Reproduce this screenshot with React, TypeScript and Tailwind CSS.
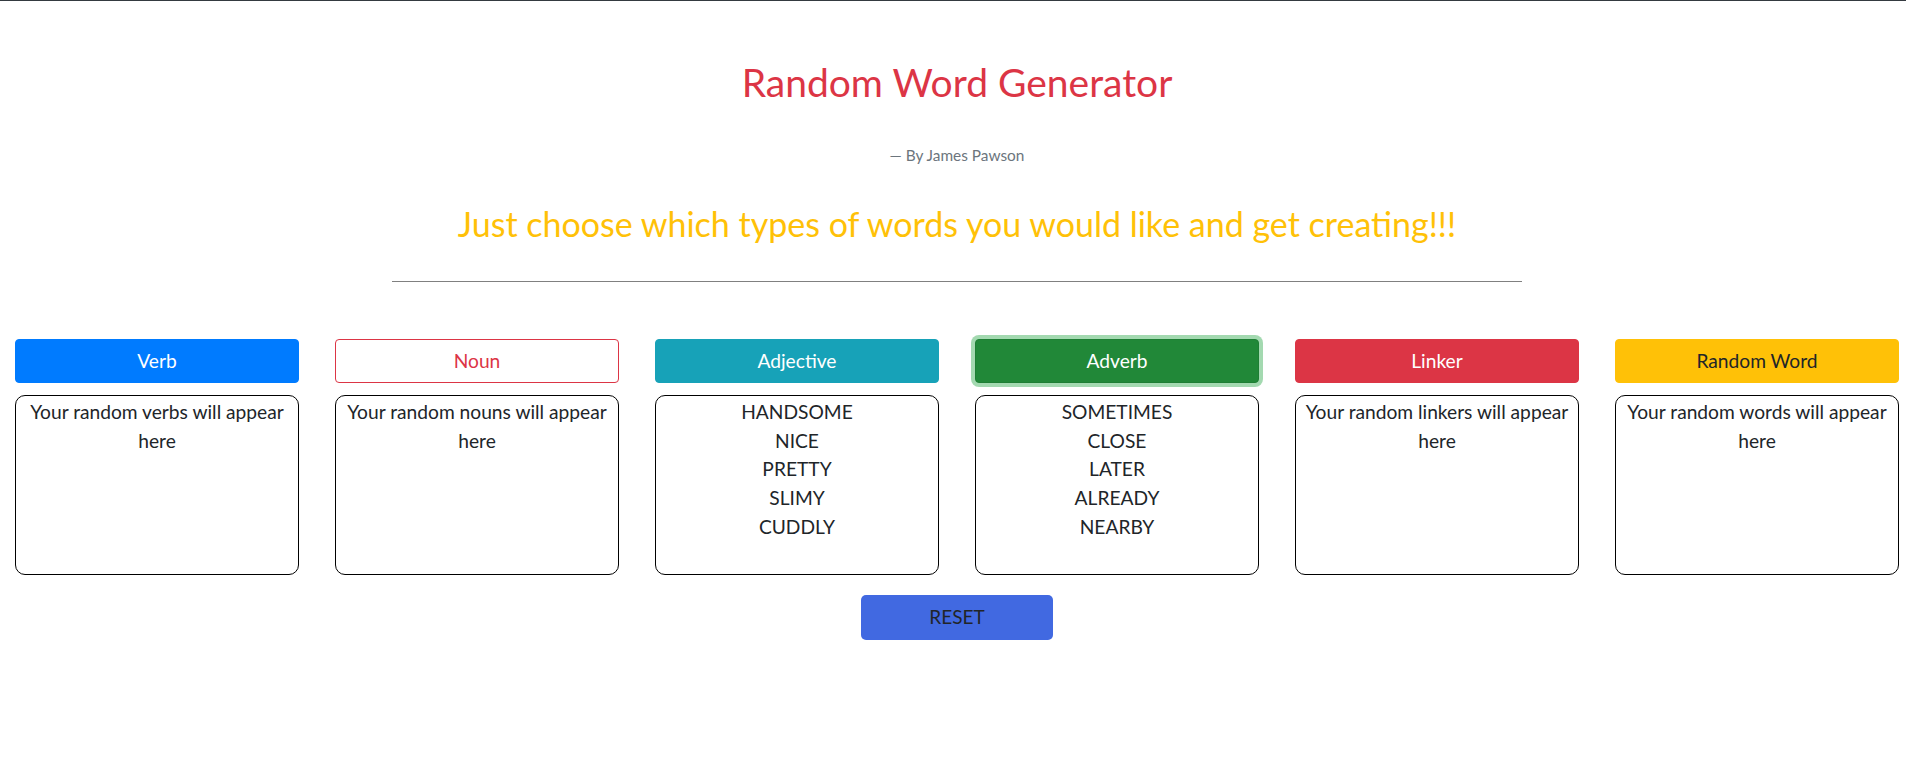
import React from "react";

const font = { fontFamily: "Lato, 'Noto Sans', sans-serif" };

type Col = {
  label: string;
  btn: string;
  items?: string[];
  placeholder?: string;
};

const cols: Col[] = [
  {
    label: "Verb",
    btn: "bg-[#007bff] text-white border-[#007bff]",
    placeholder: "Your random verbs will appear here",
  },
  {
    label: "Noun",
    btn: "bg-white text-[#dc3545] border-[#dc3545]",
    placeholder: "Your random nouns will appear here",
  },
  {
    label: "Adjective",
    btn: "bg-[#17a2b8] text-white border-[#17a2b8]",
    items: ["HANDSOME", "NICE", "PRETTY", "SLIMY", "CUDDLY"],
  },
  {
    label: "Adverb",
    btn: "bg-[#218838] text-white border-[#1e7e34] shadow-[0_0_0_4px_rgba(72,180,97,0.5)]",
    items: ["SOMETIMES", "CLOSE", "LATER", "ALREADY", "NEARBY"],
  },
  {
    label: "Linker",
    btn: "bg-[#dc3545] text-white border-[#dc3545]",
    placeholder: "Your random linkers will appear here",
  },
  {
    label: "Random Word",
    btn: "bg-[#ffc107] text-[#212529] border-[#ffc107]",
    placeholder: "Your random words will appear here",
  },
];

export default function App() {
  return (
    <div className="w-full overflow-hidden bg-white border-t border-[#343a40] min-h-[762px]" style={font}>
      <div className="w-[1914px] flex flex-col items-center text-center">
        <h1 className="mt-[58px] text-[39px] leading-[1.2] text-[#dc3545] font-normal">
          Random Word Generator
        </h1>
        <p className="mt-[38px] text-[15.4px] leading-[1.5] text-[#6c757d]">
          — By James Pawson
        </p>
        <h2 className="mt-[37px] text-[34px] leading-[1.2] text-[#ffc107] font-normal">
          Just choose which types of words you would like and get creating!!!
        </h2>
        <div className="mt-[36px] w-[1130px] h-px bg-[#808080]" />
        <div className="mt-[57px] w-full flex gap-[36px] pl-[15px]">
          {cols.map((c) => (
            <div key={c.label} className="w-[284px] flex flex-col">
              <button
                className={`h-[44px] w-full rounded-[4px] border pt-[2px] text-[19.2px] leading-[1.5] flex items-center justify-center ${c.btn}`}
              >
                {c.label}
              </button>
              <div className="mt-[12px] h-[180px] border border-black rounded-[10px] pt-[2px] px-[8px] text-[19.2px] leading-[1.5] text-[#212529]">
                {c.items
                  ? c.items.map((w) => <div key={w}>{w}</div>)
                  : c.placeholder}
              </div>
            </div>
          ))}
        </div>
        <button className="mt-[20px] w-[192px] h-[45px] rounded-[5px] bg-[#4169e1] text-[#212529] text-[19px] leading-[1.5] pt-[1px] flex items-center justify-center">
          RESET
        </button>
      </div>
    </div>
  );
}
